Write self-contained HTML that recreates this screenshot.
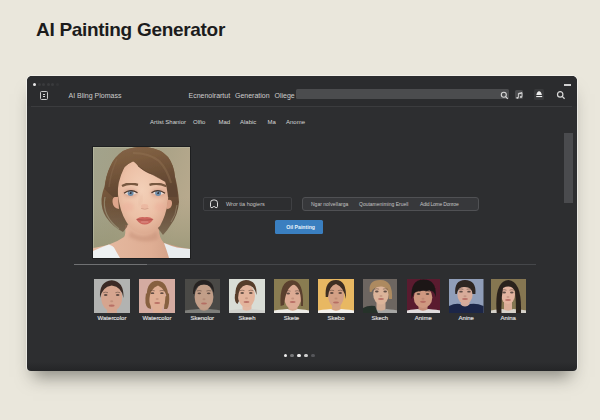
<!DOCTYPE html>
<html><head><meta charset="utf-8">
<style>
*{margin:0;padding:0;box-sizing:border-box}
html,body{width:600px;height:420px;overflow:hidden;background:#eae7dc;font-family:"Liberation Sans",sans-serif}
.a{position:absolute;white-space:nowrap}
#title{left:36px;top:19px;font-size:19px;font-weight:bold;color:#1c1c1c;letter-spacing:-0.3px}
#win{left:27px;top:76px;width:550px;height:295px;background:linear-gradient(#2d2e30 0,#2d2e30 286px,#242527 295px);border-radius:5px 5px 4px 4px;box-shadow:-1px 0 0 rgba(255,255,255,0.5),1px 0 0 rgba(255,255,255,0.5),0 -1px 0 rgba(255,255,255,0.4),0 12px 16px -6px rgba(45,45,40,0.5)}
.t{color:#cdcdcd;font-size:7px}
.s{color:#d6d6d6;font-size:6px}
.g{color:#c4c4c4}
.thumb{position:absolute;top:279px;height:34px;overflow:hidden}
.lbl{position:absolute;top:315px;font-size:6px;color:#e0e0e0;-webkit-text-stroke:0.15px #e0e0e0;text-align:center;width:50px}
.dot{position:absolute;top:353.7px;width:3.6px;height:3.6px;border-radius:50%}
</style></head><body>
<div id="title" class="a">AI Painting Generator</div>
<div id="win" class="a"></div>
<div class="a" style="left:27px;top:76px;width:550px;height:30px;background:#2b2c2e;border-radius:5px 5px 0 0"></div>

<!-- window dots -->
<div class="a" style="left:33px;top:82.5px;width:3px;height:3px;border-radius:50%;background:#e8e8e8"></div>
<div class="a" style="left:37.5px;top:82.5px;width:3px;height:3px;border-radius:50%;background:#3a3b3d"></div>
<div class="a" style="left:42px;top:82.5px;width:3px;height:3px;border-radius:50%;background:#3a3b3d"></div>
<div class="a" style="left:46.5px;top:82.5px;width:3px;height:3px;border-radius:50%;background:#3a3b3d"></div>
<div class="a" style="left:51px;top:82.5px;width:3px;height:3px;border-radius:50%;background:#3a3b3d"></div>
<div class="a" style="left:55.5px;top:82.5px;width:3px;height:3px;border-radius:50%;background:#333436"></div>

<!-- minimize -->
<div class="a" style="left:564px;top:84px;width:7px;height:1.6px;background:#d0d0d0"></div>

<!-- header icon -->
<div class="a" style="left:40px;top:90.5px;width:8px;height:9.5px;border:1px solid #c8c8c8;border-radius:1.5px"></div>
<div class="a" style="left:43px;top:93.5px;width:2px;height:1px;background:#d8d8d8"></div>
<div class="a" style="left:43px;top:96px;width:2px;height:1px;background:#d8d8d8"></div>

<div class="a t" style="left:68.5px;top:92px">AI Bling Plomass</div>
<div class="a t" style="left:188.5px;top:92px">Ecnenolrartut</div>
<div class="a t" style="left:235px;top:92px">Generation</div>
<div class="a t" style="left:274.5px;top:92px">Oliege</div>

<!-- search bar -->
<div class="a" style="left:296px;top:89px;width:213px;height:10px;background:#4b4c4e;border-radius:1.5px"></div>
<svg class="a" style="left:500px;top:90.5px" width="9" height="9" viewBox="0 0 9 9"><circle cx="3.8" cy="3.8" r="2.5" fill="none" stroke="#d8d8d8" stroke-width="1.1"/><line x1="5.6" y1="5.6" x2="7.8" y2="7.8" stroke="#d8d8d8" stroke-width="1.2"/></svg>

<!-- music box -->
<div class="a" style="left:514.7px;top:89.7px;width:8.8px;height:9.6px;background:#4a4b4d;border-radius:1.5px"></div>
<svg class="a" style="left:514.7px;top:89.7px" width="9" height="10" viewBox="0 0 9 10"><path d="M3.4 7.6V3.4L7 2.6V6.6" fill="none" stroke="#d8d8d8" stroke-width="0.9"/><path d="M3.4 3.4L7 2.6V3.6L3.4 4.4Z" fill="#d8d8d8"/><ellipse cx="2.4" cy="7.8" rx="1.2" ry="0.9" fill="#d8d8d8"/><ellipse cx="6" cy="6.9" rx="1.2" ry="0.9" fill="#d8d8d8"/></svg>

<!-- download box -->
<div class="a" style="left:534.2px;top:89.3px;width:10px;height:10.4px;background:#38393b;border-radius:1.5px"></div>
<svg class="a" style="left:534.2px;top:89.3px" width="10" height="10.4" viewBox="0 0 10 10.4"><path d="M2.3 6 Q3 2.4 5.1 2.2 Q7.2 2.4 7.9 6 Z" fill="#ececec"/><rect x="2.2" y="7" width="6" height="1.1" fill="#ececec"/></svg>

<!-- search icon right -->
<svg class="a" style="left:556px;top:89.5px" width="10" height="10" viewBox="0 0 10 10"><circle cx="4.2" cy="4.4" r="2.7" fill="none" stroke="#d8d8d8" stroke-width="1.2"/><line x1="6.2" y1="6.4" x2="8.6" y2="8.8" stroke="#d8d8d8" stroke-width="1.3"/></svg>

<!-- header line -->
<div class="a" style="left:31px;top:105.5px;width:541px;height:1px;background:#3b3c3e"></div>

<!-- tabs -->
<div class="a s" style="left:150px;top:119px">Artist Shanior</div>
<div class="a s" style="left:193px;top:119px">Olfio</div>
<div class="a s" style="left:218.5px;top:119px">Mad</div>
<div class="a s" style="left:240px;top:119px">Alabic</div>
<div class="a s" style="left:267.5px;top:119px">Ma</div>
<div class="a s" style="left:286px;top:119px">Anome</div>

<!-- scrollbar -->
<div class="a" style="left:564px;top:132.5px;width:9px;height:70px;background:#4a4b4e"></div>

<!-- portrait -->
<div class="a" style="left:92px;top:146px;width:99px;height:113px;background:#1e1f20"></div>
<div class="a" id="portrait" style="left:93px;top:147px;width:97px;height:111px;background:#a69d82;overflow:hidden"><svg width="97" height="111" viewBox="0 0 97 111" style="display:block">
<defs>
<linearGradient id="pbg" x1="0" y1="0" x2="1" y2="0.4">
<stop offset="0" stop-color="#a2a38c"/><stop offset="0.45" stop-color="#a49f84"/><stop offset="1" stop-color="#b7a98d"/>
</linearGradient>
<linearGradient id="pbg2" x1="0" y1="0" x2="0" y2="1">
<stop offset="0" stop-color="#9d9c7e" stop-opacity="0"/><stop offset="1" stop-color="#939372" stop-opacity="0.8"/>
</linearGradient>
<radialGradient id="pface" cx="0.48" cy="0.4" r="0.65">
<stop offset="0" stop-color="#f3d0b8"/><stop offset="0.6" stop-color="#ecc0a6"/><stop offset="1" stop-color="#d9a68c"/>
</radialGradient>
<linearGradient id="phair" x1="0" y1="0" x2="0.3" y2="1">
<stop offset="0" stop-color="#85664a"/><stop offset="0.35" stop-color="#7b5b3e"/><stop offset="1" stop-color="#5e4430"/>
</linearGradient>
<linearGradient id="pneck" x1="0" y1="0" x2="1" y2="0">
<stop offset="0" stop-color="#e6bba2"/><stop offset="0.6" stop-color="#dfae94"/><stop offset="1" stop-color="#c9977e"/>
</linearGradient>
<linearGradient id="pfade" x1="0" y1="0" x2="0" y2="1" gradientUnits="userSpaceOnUse"><stop offset="0.5" stop-color="#fff"/><stop offset="0.78" stop-color="#fff" stop-opacity="0.75"/><stop offset="0.8" stop-color="#fff" stop-opacity="0.55"/></linearGradient><mask id="pmask" maskUnits="userSpaceOnUse" x="0" y="0" width="97" height="111"><rect width="97" height="111" fill="url(#pfadeU)"/></mask><linearGradient id="pfadeU" x1="0" y1="0" x2="0" y2="111" gradientUnits="userSpaceOnUse"><stop offset="0.5" stop-color="#fff"/><stop offset="0.8" stop-color="#fff" stop-opacity="0.6"/></linearGradient>
<filter id="pbl" x="-10%" y="-10%" width="120%" height="120%"><feGaussianBlur stdDeviation="0.55"/></filter>
<filter id="pbl2" x="-30%" y="-30%" width="160%" height="160%"><feGaussianBlur stdDeviation="1.6"/></filter>
</defs>
<rect width="97" height="111" fill="url(#pbg)"/>
<rect y="50" width="97" height="61" fill="url(#pbg2)"/>
<rect width="1" height="111" fill="#c4c6ae" opacity="0.5"/><rect width="97" height="1" fill="#c4c6ae" opacity="0.4"/>
<!-- neck & chest -->
<path d="M32 78 Q33 88 31 90 Q24 95 16 97.4 Q6 100 0 101 L0 111 L97 111 L97 102 Q84 100 71 96 Q65 90 66 78 Z" fill="url(#pneck)"/>
<path d="M37 84 Q50 94 64 84 L65 92 Q52 98 36 90 Z" fill="#c48e76" opacity="0.5" filter="url(#pbl2)"/>
<!-- shirt -->
<path d="M0 104 Q8 100 16 97.4 Q20 99 21 100.5 Q24 106 27 111 L0 111 Z" fill="#eef1f2"/>
<path d="M71 96 Q78 99 84 100.6 Q90 101.5 97 102 L97 111 L76 111 Q74 104 71 96 Z" fill="#e9edef"/>
<!-- back hair -->
<path mask="url(#pmask)" d="M30 85 Q20 80 13 70 Q8 62 8.5 52 Q9.5 44 11.5 40 Q13 28 17 20 Q21 10 30 4 Q42 -1 54 0 Q68 2 75 10 Q81 18 82 30 Q85 40 86 55 Q85 68 78 77.5 Q74 84 70 88 L64 80 Q60 60 50 50 Q38 60 34 80 Z" fill="url(#phair)" filter="url(#pbl)"/>
<path d="M12 50 Q10 60 14 68 Q18 76 26 82" stroke="#a9a58a" stroke-width="1.2" fill="none" opacity="0.55" filter="url(#pbl)"/>
<path d="M84 58 Q83 68 78 75" stroke="#b0a487" stroke-width="1" fill="none" opacity="0.45" filter="url(#pbl)"/>
<!-- face -->
<path d="M25 36 Q27 20 40 14 Q60 16 72 30 Q76 42 75 55 Q73 68 67 79 Q59 87 51 87 Q43 87 37 80 Q29 70 26.5 57 Q24 46 25 36 Z" fill="url(#pface)"/>
<!-- ears -->
<path d="M25 50 Q19 49 19.5 55 Q20 61 26 62 Z" fill="#dea58b"/>
<path d="M74.5 53 Q79.5 52 79 57 Q78.5 62 73.5 62 Z" fill="#d9a087"/>
<!-- bangs / hairline -->
<path d="M11.5 42 Q13 28 17 20 Q21 10 30 4 Q42 -1 54 0 Q68 2 75 10 Q81 18 82 30 Q84 40 84.5 50 L75 50 Q74 40 72 34.4 Q67 31.6 60 27.8 Q51 25 45 19 Q42 15 40 14.4 Q34 17 31.5 20 Q27.7 27.8 25.8 35.4 Q24.5 42 24.5 50 L20 50 Q15 46 11.5 42 Z" fill="url(#phair)" filter="url(#pbl)"/>
<path d="M40 6 Q56 6 66 14 Q74 22 78 36" stroke="#9a7a5a" stroke-width="2.2" fill="none" opacity="0.35" filter="url(#pbl)"/>
<path d="M24 12 Q18 24 16 40" stroke="#94755a" stroke-width="1.4" fill="none" opacity="0.3" filter="url(#pbl)"/>
<path d="M45 19 Q52 25 60 27.8 Q67 31.6 72 34.4" stroke="#5a3f2c" stroke-width="1" fill="none" opacity="0.6" filter="url(#pbl)"/>
<!-- cheeks -->
<ellipse cx="35" cy="60" rx="6" ry="4.5" fill="#eba896" opacity="0.35" filter="url(#pbl2)"/>
<ellipse cx="67" cy="60" rx="5.5" ry="4.5" fill="#eba896" opacity="0.35" filter="url(#pbl2)"/>
<!-- brows -->
<path d="M29 39 Q36 35.2 45 37.8" stroke="#775840" stroke-width="2.3" fill="none" filter="url(#pbl)"/>
<path d="M56.5 37.8 Q65 35.2 73.5 39.2" stroke="#775840" stroke-width="2.3" fill="none" filter="url(#pbl)"/>
<!-- eyes -->
<ellipse cx="37.5" cy="46" rx="7.5" ry="4.5" fill="#c98f7e" opacity="0.45" filter="url(#pbl2)"/>
<ellipse cx="65" cy="46" rx="7.5" ry="4.5" fill="#c98f7e" opacity="0.45" filter="url(#pbl2)"/>
<path d="M31.5 46.2 Q37.5 41.8 44 46 Q38 50 31.5 46.2 Z" fill="#e8dcd6"/>
<circle cx="37.6" cy="46" r="3" fill="#6d8ca8"/>
<circle cx="37.6" cy="46" r="1.1" fill="#2e3038"/>
<circle cx="36.7" cy="45" r="0.5" fill="#ffffff" opacity="0.7"/>
<path d="M31 46.2 Q37.5 41.3 44.5 45.8" stroke="#4a3428" stroke-width="1.2" fill="none" filter="url(#pbl)"/>
<path d="M59 45.8 Q65 41.8 71.5 46.2 Q65.5 50 59 45.8 Z" fill="#e8dcd6"/>
<circle cx="65.1" cy="46" r="3" fill="#6d8ca8"/>
<circle cx="65.1" cy="46" r="1.1" fill="#2e3038"/>
<circle cx="64.2" cy="45" r="0.5" fill="#ffffff" opacity="0.7"/>
<path d="M58.5 45.8 Q65 41.3 72 46.2" stroke="#4a3428" stroke-width="1.2" fill="none" filter="url(#pbl)"/>
<!-- nose -->
<path d="M48.5 48 Q48 54 46.5 58.5" stroke="#c98d76" stroke-width="2" fill="none" opacity="0.18" filter="url(#pbl2)"/>
<ellipse cx="51.7" cy="59.5" rx="3.6" ry="2.4" fill="#eab09a" opacity="0.6" filter="url(#pbl)"/>
<path d="M48 61.3 Q51.7 63.3 55.5 61.3" stroke="#b57a66" stroke-width="0.8" fill="none" opacity="0.55" filter="url(#pbl)"/>
<!-- lips -->
<path d="M43 72.3 Q47.5 69.2 51.7 70.3 Q56 69.2 60.5 72.3 Q56.5 77.6 51.7 77.5 Q47 77.6 43 72.3 Z" fill="#cd665d"/>
<path d="M44 72.5 Q51.7 74 59.5 72.5" stroke="#9a4a44" stroke-width="0.6" fill="none"/>
<ellipse cx="51.7" cy="75" rx="4" ry="1.2" fill="#e09a90" opacity="0.45" filter="url(#pbl)"/>
</svg></div>

<!-- input -->
<div class="a" style="left:203px;top:197px;width:89px;height:13.5px;border:1px solid #3f4043;border-radius:2px"></div>
<svg class="a" style="left:209px;top:199px" width="10" height="10" viewBox="0 0 10 10"><path d="M1.5 7.6V3.8Q1.5 1 4.2 1H5.8Q8.5 1 8.5 3.8V7.6Q8.4 8.9 7 8.6Q5.8 8.2 5 7.2Q4.2 8.2 3 8.6Q1.6 8.9 1.5 7.6Z" fill="none" stroke="#dcdcdc" stroke-width="1"/></svg>
<div class="a s g" style="left:226px;top:200.5px;font-size:5.5px">Wror tia hogiers</div>

<!-- group -->
<div class="a" style="left:302px;top:197px;width:177px;height:14px;background:#37383b;border:1px solid #505154;border-radius:3px"></div>
<div class="a s g" style="left:311px;top:200.8px;font-size:5px">Ngar noIveIIarga</div>
<div class="a s g" style="left:359px;top:200.8px;font-size:5px">Qoutameniming Eruell</div>
<div class="a s g" style="left:420px;top:200.8px;font-size:5px;letter-spacing:-0.2px">Adid Lome Donroe</div>

<!-- button -->
<div class="a" style="left:275px;top:220px;width:48px;height:14px;background:#3a7fc0;border-radius:1.5px"></div>
<div class="a" style="left:286.2px;top:224.2px;font-size:5.2px;font-weight:bold;color:#e8f2fa">Oil Painting</div>

<!-- progress line -->
<div class="a" style="left:74px;top:264px;width:462px;height:1px;background:#45474a"></div>
<div class="a" style="left:74px;top:264px;width:73px;height:1px;background:#707173"></div>

<!-- thumbs -->
<div id="thumbs"><svg width="0" height="0" style="position:absolute"><defs><filter id="tb" x="-5%" y="-5%" width="110%" height="110%"><feGaussianBlur stdDeviation="0.35"/></filter></defs></svg><div class="thumb" style="left:94px;width:36px"><svg width="36" height="34" viewBox="0 0 36 34" style="display:block"><rect width="36" height="34" fill="#b2b3b1"/><g filter="url(#tb)"><rect x="13" y="26" width="10" height="10" fill="#d6a58f" opacity="0.9"/><ellipse cx="17.7" cy="18.5" rx="10.5" ry="13.8" fill="#d6a58f"/><path d="M6 19 Q5 2 17.7 1.2 Q30 2 29.5 19 Q28 8 17.7 6.5 Q8 8 6 19Z" fill="#3a2c25"/><path d="M9.2 13.7 Q11.7 12.7 14.0 13.7" stroke="#4a3830" stroke-width="0.8" fill="none" opacity="0.6"/><path d="M21.4 13.7 Q23.7 12.7 26.2 13.7" stroke="#4a3830" stroke-width="0.8" fill="none" opacity="0.6"/><ellipse cx="11.7" cy="16" rx="1.8" ry="0.9" fill="#3a2e2a" opacity="0.75"/><ellipse cx="23.7" cy="16" rx="1.8" ry="0.9" fill="#3a2e2a" opacity="0.75"/><ellipse cx="17.7" cy="22.150000000000002" rx="1.5" ry="1" fill="#9a6a58" opacity="0.35"/><ellipse cx="17.7" cy="26.7" rx="3" ry="1.1" fill="#b0625a" opacity="0.8"/></g></svg></div>
<div class="lbl" style="left:87.0px">Watercolor</div>
<div class="thumb" style="left:139px;width:36px"><svg width="36" height="34" viewBox="0 0 36 34" style="display:block"><rect width="36" height="34" fill="#d4aba1"/><g filter="url(#tb)"><path d="M7 14 Q5 26 9 29 L12 30 L11 18Z M30 14 Q31 26 28 30 L25 30 L26 18Z" fill="#87613f"/><rect x="14" y="27" width="9" height="10" fill="#dfae94" opacity="0.9"/><ellipse cx="18.2" cy="18.5" rx="8.2" ry="13.3" fill="#dfae94"/><path d="M8 22 Q6 2 18.5 1.8 Q30 2 29.5 24 Q27 10 19 6.5 Q11 9 10 22Z" fill="#87613f"/><path d="M11.0 11.899999999999999 Q13.5 10.899999999999999 15.8 11.899999999999999" stroke="#4a3830" stroke-width="0.8" fill="none" opacity="0.6"/><path d="M20.599999999999998 11.899999999999999 Q22.9 10.899999999999999 25.4 11.899999999999999" stroke="#4a3830" stroke-width="0.8" fill="none" opacity="0.6"/><ellipse cx="13.5" cy="14.2" rx="1.8" ry="0.9" fill="#3a2e2a" opacity="0.75"/><ellipse cx="22.9" cy="14.2" rx="1.8" ry="0.9" fill="#3a2e2a" opacity="0.75"/><ellipse cx="18.2" cy="19.900000000000002" rx="1.5" ry="1" fill="#9a6a58" opacity="0.35"/><ellipse cx="18.2" cy="24" rx="3" ry="1.1" fill="#b0625a" opacity="0.8"/></g></svg></div>
<div class="lbl" style="left:132.0px">Watercolor</div>
<div class="thumb" style="left:184.5px;width:35.5px"><svg width="35.5" height="34" viewBox="0 0 35.5 34" style="display:block"><rect width="35.5" height="34" fill="#4a4946"/><g filter="url(#tb)"><rect x="14.5" y="25" width="9" height="10" fill="#c29e88" opacity="0.9"/><path d="M0 34 L0 31.5 Q11 30 14 30 Q19 33.5 24 30 Q27 30 35.5 31.5 L35.5 34Z" fill="#7e7e7a"/><ellipse cx="19" cy="18" rx="9.4" ry="12.8" fill="#c29e88"/><path d="M8 15 Q7.5 1.5 18.5 1 Q30 1.5 29 15 Q27 5.5 19 5.5 Q10 5.5 9.5 15Z" fill="#282320"/><path d="M11.8 12.0 Q14.3 11.0 16.6 12.0" stroke="#4a3830" stroke-width="0.8" fill="none" opacity="0.6"/><path d="M21.4 12.0 Q23.7 11.0 26.2 12.0" stroke="#4a3830" stroke-width="0.8" fill="none" opacity="0.6"/><ellipse cx="14.3" cy="14.3" rx="1.8" ry="0.9" fill="#3a2e2a" opacity="0.75"/><ellipse cx="23.7" cy="14.3" rx="1.8" ry="0.9" fill="#3a2e2a" opacity="0.75"/><ellipse cx="19" cy="20.2" rx="1.5" ry="1" fill="#9a6a58" opacity="0.35"/><ellipse cx="19" cy="24.5" rx="3" ry="1.1" fill="#b0625a" opacity="0.8"/></g></svg></div>
<div class="lbl" style="left:177.25px">Skenolor</div>
<div class="thumb" style="left:229px;width:36px"><svg width="36" height="34" viewBox="0 0 36 34" style="display:block"><rect width="36" height="34" fill="#d9ddd6"/><g filter="url(#tb)"><path d="M6 15 Q5 23 8.5 25 L10 22 L9 15Z" fill="#573c2c"/><rect x="13.5" y="24" width="9" height="10" fill="#e3b49c" opacity="0.9"/><path d="M0 34 L0 31.5 Q9.5 30 12.5 30 Q17.5 33.5 22.5 30 Q25.5 30 36 31.5 L36 34Z" fill="#cfd0cc"/><ellipse cx="17.5" cy="17" rx="8.5" ry="11.3" fill="#e3b49c"/><path d="M6.5 20 Q5 1.5 17 1 Q28.5 1.5 27.5 16 Q25 5 17 6 Q10 7 9 19Z" fill="#573c2c"/><path d="M10.7 11.7 Q13.2 10.7 15.5 11.7" stroke="#4a3830" stroke-width="0.8" fill="none" opacity="0.6"/><path d="M19.5 11.7 Q21.8 10.7 24.3 11.7" stroke="#4a3830" stroke-width="0.8" fill="none" opacity="0.6"/><ellipse cx="13.2" cy="14" rx="1.8" ry="0.9" fill="#3a2e2a" opacity="0.75"/><ellipse cx="21.8" cy="14" rx="1.8" ry="0.9" fill="#3a2e2a" opacity="0.75"/><ellipse cx="17.5" cy="19.3" rx="1.5" ry="1" fill="#9a6a58" opacity="0.35"/><ellipse cx="17.5" cy="23" rx="3" ry="1.1" fill="#b0625a" opacity="0.8"/></g></svg></div>
<div class="lbl" style="left:222.0px">Skeeh</div>
<div class="thumb" style="left:274px;width:35px"><svg width="35" height="34" viewBox="0 0 35 34" style="display:block"><rect width="35" height="34" fill="#897c51"/><g filter="url(#tb)"><rect x="14.5" y="25" width="9" height="10" fill="#dcab94" opacity="0.9"/><path d="M0 34 L0 31.5 Q10.7 30 13.7 30 Q18.7 33.5 23.7 30 Q26.7 30 35 31.5 L35 34Z" fill="#ecebe6"/><ellipse cx="18.7" cy="17.8" rx="8.8" ry="12.2" fill="#dcab94"/><path d="M6.6 27 Q5 1.5 18 1.2 Q30 1.5 29 27 L26.8 27 Q28 10 20 5.5 Q12 8 10 26Z" fill="#5a3f2d"/><path d="M11.7 12.2 Q14.2 11.2 16.5 12.2" stroke="#4a3830" stroke-width="0.8" fill="none" opacity="0.6"/><path d="M20.9 12.2 Q23.2 11.2 25.7 12.2" stroke="#4a3830" stroke-width="0.8" fill="none" opacity="0.6"/><ellipse cx="14.2" cy="14.5" rx="1.8" ry="0.9" fill="#3a2e2a" opacity="0.75"/><ellipse cx="23.2" cy="14.5" rx="1.8" ry="0.9" fill="#3a2e2a" opacity="0.75"/><ellipse cx="18.7" cy="19.55" rx="1.5" ry="1" fill="#9a6a58" opacity="0.35"/><ellipse cx="18.7" cy="23" rx="3" ry="1.1" fill="#b0625a" opacity="0.8"/></g></svg></div>
<div class="lbl" style="left:266.5px">Skete</div>
<div class="thumb" style="left:318px;width:36px"><svg width="36" height="34" viewBox="0 0 36 34" style="display:block"><rect width="36" height="34" fill="#e8b862"/><g filter="url(#tb)"><rect x="14" y="23" width="8.5" height="11" fill="#d3a085" opacity="0.9"/><path d="M0 34 L0 31.5 Q10 30 13 30 Q18 33.5 23 30 Q26 30 36 31.5 L36 34Z" fill="#f2f0ec"/><ellipse cx="18" cy="16.5" rx="8" ry="11.5" fill="#d3a085"/><path d="M7.7 18 Q6.5 1 18 1 Q29 1 27.8 20 Q26 8 18 5 Q11 7 10 18Z" fill="#3c2d24"/><path d="M11.3 11.7 Q13.8 10.7 16.1 11.7" stroke="#4a3830" stroke-width="0.8" fill="none" opacity="0.6"/><path d="M19.9 11.7 Q22.2 10.7 24.7 11.7" stroke="#4a3830" stroke-width="0.8" fill="none" opacity="0.6"/><ellipse cx="13.8" cy="14" rx="1.8" ry="0.9" fill="#3a2e2a" opacity="0.75"/><ellipse cx="22.2" cy="14" rx="1.8" ry="0.9" fill="#3a2e2a" opacity="0.75"/><ellipse cx="18" cy="19.55" rx="1.5" ry="1" fill="#9a6a58" opacity="0.35"/><ellipse cx="18" cy="23.5" rx="3" ry="1.1" fill="#b0625a" opacity="0.8"/></g></svg></div>
<div class="lbl" style="left:311.0px">Skebo</div>
<div class="thumb" style="left:362.5px;width:34.5px"><svg width="34.5" height="34" viewBox="0 0 34.5 34" style="display:block"><rect width="34.5" height="34" fill="#6d6661"/><g filter="url(#tb)"><rect x="13.5" y="22" width="9" height="10" fill="#dcb49a" opacity="0.9"/><path d="M0 34 L0 31.5 Q10 30 13 30 Q18 33.5 23 30 Q26 30 34.5 31.5 L34.5 34Z" fill="#a6a6a4"/><path d="M0 34 L0 29 Q5 26 12 27 L15 34Z" fill="#28302c"/><ellipse cx="18" cy="15.5" rx="7.8" ry="10" fill="#dcb49a"/><path d="M6.8 13 Q5 1 17 1 Q30 0.5 29 20 L25.8 20 Q26.5 8 18 7.5 Q10 8 8.5 13Z" fill="#ad8a60"/><path d="M11.3 10.2 Q13.8 9.2 16.1 10.2" stroke="#4a3830" stroke-width="0.8" fill="none" opacity="0.6"/><path d="M19.9 10.2 Q22.2 9.2 24.7 10.2" stroke="#4a3830" stroke-width="0.8" fill="none" opacity="0.6"/><ellipse cx="13.8" cy="12.5" rx="1.8" ry="0.9" fill="#3a2e2a" opacity="0.75"/><ellipse cx="22.2" cy="12.5" rx="1.8" ry="0.9" fill="#3a2e2a" opacity="0.75"/><ellipse cx="18" cy="17.05" rx="1.5" ry="1" fill="#9a6a58" opacity="0.35"/><ellipse cx="18" cy="20" rx="3" ry="1.1" fill="#b0625a" opacity="0.8"/></g></svg></div>
<div class="lbl" style="left:354.75px">Skech</div>
<div class="thumb" style="left:406.5px;width:33.5px"><svg width="33.5" height="34" viewBox="0 0 33.5 34" style="display:block"><rect width="33.5" height="34" fill="#5a1b2f"/><g filter="url(#tb)"><rect x="11.5" y="25" width="9" height="9" fill="#cf9880" opacity="0.9"/><path d="M0 34 L0 31.5 Q8 30 11 30 Q16 33.5 21 30 Q24 30 33.5 31.5 L33.5 34Z" fill="#e0dcdc"/><ellipse cx="16" cy="18.5" rx="9.3" ry="10.5" fill="#cf9880"/><path d="M4.5 20 Q3 0.5 16.5 0.5 Q30 0.5 28.8 18 Q27 10 20 12 Q12 11 7 14Z" fill="#1c1618"/><path d="M9.0 12.7 Q11.5 11.7 13.8 12.7" stroke="#4a3830" stroke-width="0.8" fill="none" opacity="0.6"/><path d="M18.2 12.7 Q20.5 11.7 23.0 12.7" stroke="#4a3830" stroke-width="0.8" fill="none" opacity="0.6"/><ellipse cx="11.5" cy="15" rx="1.8" ry="0.9" fill="#3a2e2a" opacity="0.75"/><ellipse cx="20.5" cy="15" rx="1.8" ry="0.9" fill="#3a2e2a" opacity="0.75"/><ellipse cx="16" cy="19.7" rx="1.5" ry="1" fill="#9a6a58" opacity="0.35"/><ellipse cx="16" cy="22.8" rx="3" ry="1.1" fill="#b0625a" opacity="0.8"/></g></svg></div>
<div class="lbl" style="left:398.25px">Anime</div>
<div class="thumb" style="left:449px;width:34.5px"><svg width="34.5" height="34" viewBox="0 0 34.5 34" style="display:block"><rect width="34.5" height="34" fill="#909eb9"/><g filter="url(#tb)"><rect x="12" y="21" width="8.5" height="11" fill="#d8ac9a" opacity="0.9"/><path d="M0 34 L0 27 Q6 24 11 25 Q16 30 21 25 Q28 24 34.5 27 L34.5 34Z" fill="#1b2747"/><ellipse cx="16" cy="15.8" rx="7.6" ry="9.2" fill="#d8ac9a"/><path d="M6.3 15 Q5 1 16 1 Q27.5 1 26.4 15 L23.5 15 Q23 8 16 8 Q9 7 7.8 15Z" fill="#2d2521"/><path d="M9.5 10.399999999999999 Q12 9.399999999999999 14.3 10.399999999999999" stroke="#4a3830" stroke-width="0.8" fill="none" opacity="0.6"/><path d="M17.7 10.399999999999999 Q20 9.399999999999999 22.5 10.399999999999999" stroke="#4a3830" stroke-width="0.8" fill="none" opacity="0.6"/><ellipse cx="12" cy="12.7" rx="1.8" ry="0.9" fill="#3a2e2a" opacity="0.75"/><ellipse cx="20" cy="12.7" rx="1.8" ry="0.9" fill="#3a2e2a" opacity="0.75"/><ellipse cx="16" cy="17.150000000000002" rx="1.5" ry="1" fill="#9a6a58" opacity="0.35"/><ellipse cx="16" cy="20" rx="3" ry="1.1" fill="#b0625a" opacity="0.8"/></g></svg></div>
<div class="lbl" style="left:441.25px">Anine</div>
<div class="thumb" style="left:490.5px;width:35.5px"><svg width="35.5" height="34" viewBox="0 0 35.5 34" style="display:block"><rect width="35.5" height="34" fill="#857651"/><g filter="url(#tb)"><rect x="13" y="22" width="8" height="11" fill="#e4b4a0" opacity="0.9"/><path d="M0 34 L0 31.5 Q9 30 12 30 Q17 33.5 22 30 Q25 30 35.5 31.5 L35.5 34Z" fill="#d6d2ca"/><ellipse cx="17" cy="15.5" rx="7" ry="9.5" fill="#e4b4a0"/><path d="M5.7 34 Q3 2 17.5 1 Q31 2 30 34 L25 34 Q25 22 24 12 Q20 5 12 9 Q10 20 10.5 34Z" fill="#2c221f"/><path d="M10.7 11.2 Q13.2 10.2 15.5 11.2" stroke="#4a3830" stroke-width="0.8" fill="none" opacity="0.6"/><path d="M18.5 11.2 Q20.8 10.2 23.3 11.2" stroke="#4a3830" stroke-width="0.8" fill="none" opacity="0.6"/><ellipse cx="13.2" cy="13.5" rx="1.8" ry="0.9" fill="#3a2e2a" opacity="0.75"/><ellipse cx="20.8" cy="13.5" rx="1.8" ry="0.9" fill="#3a2e2a" opacity="0.75"/><ellipse cx="17" cy="18.05" rx="1.5" ry="1" fill="#9a6a58" opacity="0.35"/><ellipse cx="17" cy="21" rx="3" ry="1.1" fill="#b0625a" opacity="0.8"/></g></svg></div>
<div class="lbl" style="left:483.25px">Anina</div></div>

<!-- dots -->
<div class="dot" style="left:283.5px;background:#f0f0f0"></div>
<div class="dot" style="left:290.4px;background:#77787a"></div>
<div class="dot" style="left:297.2px;background:#f0f0f0"></div>
<div class="dot" style="left:304.1px;background:#d0d0d0"></div>
<div class="dot" style="left:311.3px;background:#55565a"></div>
</body></html>
